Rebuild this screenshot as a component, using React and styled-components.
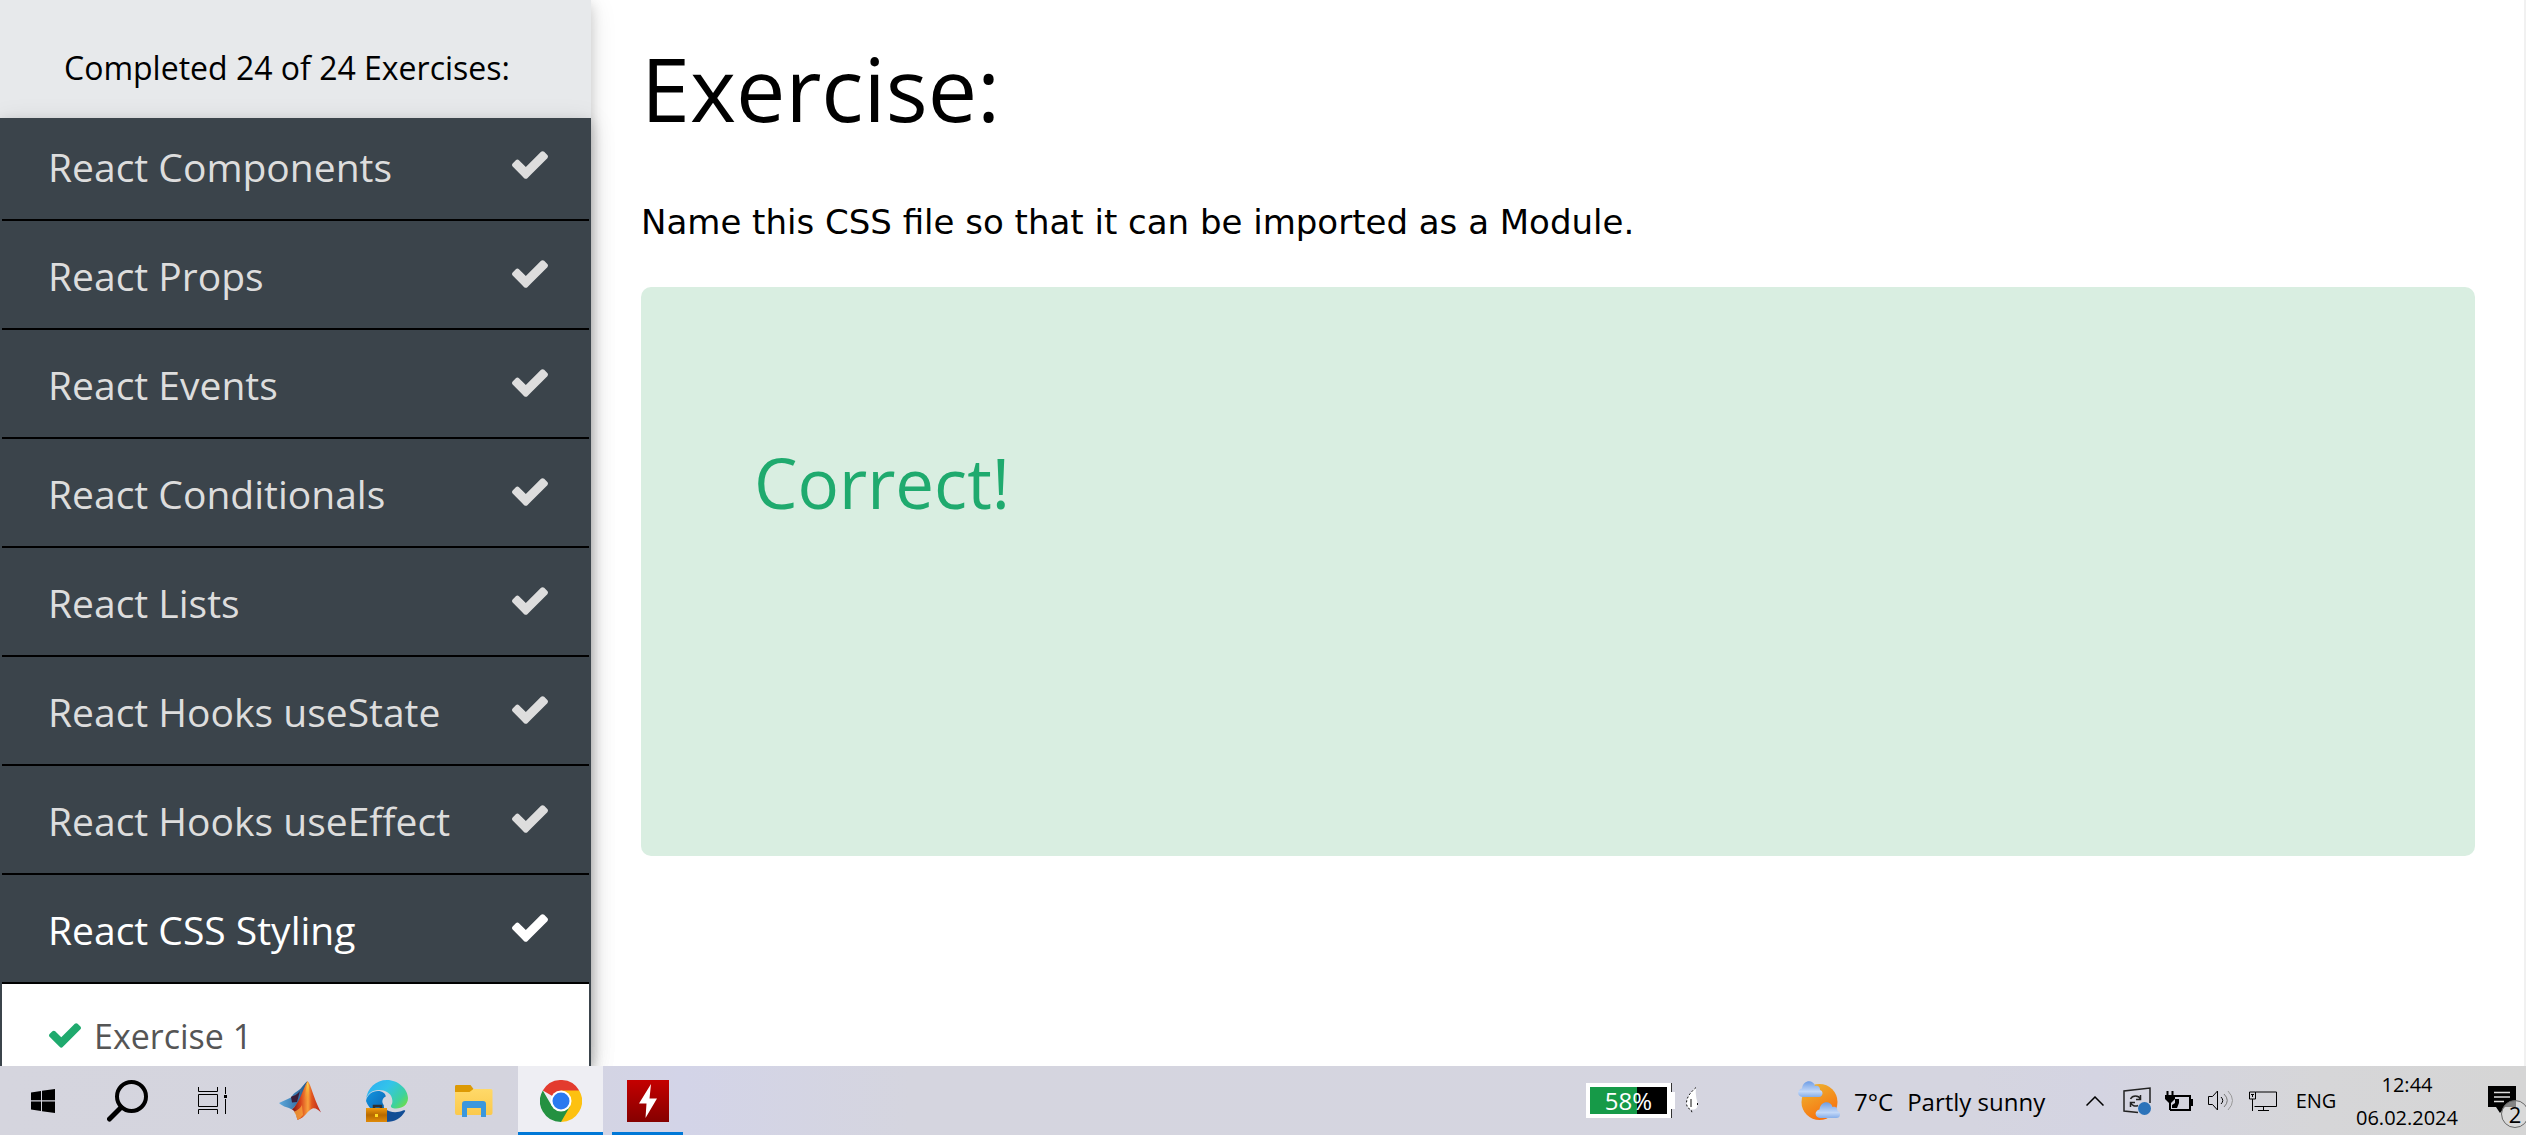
import React from "react";
import styled, { createGlobalStyle } from "styled-components";

const GlobalStyle = createGlobalStyle`
  * { box-sizing: border-box; }
  body {
    margin: 0;
    background: #fff;
    color: #000;
    font-family: "Open Sans", "Noto Sans", sans-serif;
  }
  button { font: inherit; color: inherit; border: 0; background: none; padding: 0; margin: 0; cursor: pointer; }
  svg { display: block; flex: none; }
`;

const Screen = styled.div`
  height: 100vh;
  display: flex;
  flex-direction: column;
  overflow: hidden;
`;

const Page = styled.div`
  flex: 1;
  min-height: 0;
  display: flex;
  border-right: 2px solid #f1f1f1;
`;

const Sidebar = styled.aside`
  width: 591px;
  flex: none;
  display: flex;
  flex-direction: column;
  background: #e7e9eb;
  box-shadow: 0 5px 12px rgba(0, 0, 0, 0.16), 0 5px 25px rgba(0, 0, 0, 0.12);
`;

const Progress = styled.div`
  height: 118px;
  flex: none;
  padding: 44px 64px 0;
  font-size: 32px;
  line-height: 48px;
  white-space: nowrap;
`;

const Menu = styled.nav`
  flex: 1;
  min-height: 0;
  background: #3b444b;
  box-shadow: 0 5px 12px rgba(0, 0, 0, 0.16), 0 5px 25px rgba(0, 0, 0, 0.12);
  overflow: hidden;
`;

const MenuList = styled.ul`
  list-style: none;
  margin: -6px 0 0;
  padding: 0 2px;
`;

const Topic = styled.button`
  width: 100%;
  height: 109px;
  display: flex;
  align-items: center;
  justify-content: space-between;
  padding: 0 41px 2px 46px;
  border-bottom: 2px solid #000;
  color: ${(p) => (p.$active ? "#fff" : "#ddd")};
  font-size: 39px;
  line-height: 56px;
  white-space: nowrap;
`;

const TopicName = styled.span`
  padding-top: 4px;
`;

const ExerciseLink = styled.a`
  display: flex;
  align-items: center;
  gap: 13px;
  height: 103px;
  padding: 0 47px;
  background: #fff;
  color: #555;
  font-size: 34px;
  line-height: 48px;
  text-decoration: none;
`;

const Content = styled.main`
  flex: 1;
  min-width: 0;
  padding: 34px 49px 0 50px;
`;

const Title = styled.h1`
  margin: 0;
  font-size: 88px;
  line-height: 108px;
  font-weight: 400;
`;

const Task = styled.p`
  margin: 56px 0 41px;
  font-family: "DejaVu Sans", sans-serif;
  font-size: 34px;
  line-height: 48px;
`;

const Result = styled.section`
  height: 569px;
  padding: 145px 113px;
  border-radius: 10px;
  background: #d9eee1;
`;

const ResultTitle = styled.h2`
  margin: 0;
  color: #1faa6e;
  font-size: 69px;
  line-height: 100px;
  font-weight: 400;
`;

const Taskbar = styled.footer`
  height: 69px;
  flex: none;
  display: flex;
  justify-content: space-between;
  background: linear-gradient(90deg, #d5d5de 0%, #d4d4de 20%, #d3d4e8 27%, #d5d5df 36%, #d5d5e0 78%, #d4d4e2 83%, #d6d6d8 92%, #d5d5d5 100%);
`;

const Group = styled.div`
  display: flex;
  align-items: stretch;
  gap: ${(p) => p.$gap || 0}px;
`;

const AppButton = styled.button`
  width: 85px;
  display: flex;
  flex-direction: column;
  align-items: center;
  justify-content: space-between;
  background: ${(p) => (p.$active ? "#eeeef3" : "none")};
  &::after {
    content: "";
    width: ${(p) => (p.$active ? "100%" : "71px")};
    height: 3px;
    background: ${(p) => (p.$running ? "#0078d7" : "transparent")};
  }
`;

const IconBox = styled.span`
  flex: 1;
  display: flex;
  align-items: center;
  padding-top: 3px;
`;

const BatteryMeter = styled.div`
  display: flex;
  align-items: center;
  gap: 11px;
  margin-right: 100px;
`;

const BatteryShell = styled.div`
  display: flex;
  align-items: center;
`;

const BatteryBody = styled.div`
  width: 85px;
  height: 35px;
  border: 4px solid #fff;
  background: linear-gradient(90deg, #169a48 0 47px, #000 47px);
  box-shadow: 1px 0 #333;
  color: #fff;
  font-size: 24px;
  line-height: 28px;
  text-align: center;
`;

const BatteryCap = styled.div`
  width: 4px;
  height: 17px;
  background: #fff;
`;

const Weather = styled.button`
  width: 276px;
  display: flex;
  align-items: center;
  gap: 14px;
  font-size: 24px;
  line-height: 32px;
  white-space: nowrap;
`;

const Forecast = styled.span`
  display: flex;
  gap: 14px;
  padding-top: 2px;
`;

const TrayButton = styled.button`
  width: ${(p) => p.$width || 42}px;
  display: flex;
  flex-direction: column;
  align-items: center;
  justify-content: center;
  font-size: 20px;
  line-height: 33px;
  white-space: nowrap;
`;

const Notifications = styled.button`
  width: 60px;
  position: relative;
  padding: 0 0 2px 22px;
  overflow: hidden;
`;

const Badge = styled.span`
  position: absolute;
  left: 35px;
  top: 34px;
  width: 28px;
  height: 28px;
  border: 1px solid #666;
  border-radius: 50%;
  background: rgba(220, 220, 220, 0.6);
  font-size: 22px;
  line-height: 26px;
  text-align: center;
`;

const CheckIcon = ({ width, color = "currentColor" }) => (
  <svg width={width} height={(width * 28) / 36} viewBox="121 334 1550 1188" fill={color}>
    <path d="M1671 566q0 40-28 68l-724 724-136 136q-28 28-68 28t-68-28l-136-136-362-362q-28-28-28-68t28-68l136-136q28-28 68-28t68 28l294 295 656-657q28-28 68-28t68 28l136 136q28 28 28 68z" />
  </svg>
);

const WindowsIcon = () => (
  <svg width="24" height="24" viewBox="0 0 24 24">
    <path d="M0 3.4 10 2v9.3H0zM11 1.8 24 0v11.3H11zM0 12.4h10V22L0 20.6zM11 12.4h13V24l-13-1.8z" />
  </svg>
);

const SearchIcon = () => (
  <svg width="42" height="42" viewBox="0 0 42 42" fill="none" stroke="#000">
    <circle cx="24.5" cy="16.5" r="14.5" strokeWidth="4" />
    <path d="M14 27.5 2.5 39" strokeWidth="5" strokeLinecap="round" />
  </svg>
);

const TaskViewIcon = () => (
  <svg width="29" height="27" viewBox="0 0 29 27" fill="none" stroke="#000">
    <path d="M.5 0v4.5h19V0M.5 7.5h19v12H.5zM.5 27v-4.5h19V27M27.5 0v7M27.5 12v15" />
    <path d="M26 8h3v3h-3z" fill="#000" stroke="none" />
  </svg>
);

const MatlabIcon = () => (
  <svg width="42" height="40" viewBox="0 0 42 40">
    <defs>
      <linearGradient id="mlBlue" x1="0" x2="1"><stop offset="0" stopColor="#5ea9dc" /><stop offset="1" stopColor="#20588f" /></linearGradient>
      <linearGradient id="mlRed" x1="0" x2="1">
        <stop offset="0" stopColor="#7a1512" /><stop offset=".3" stopColor="#d8431c" /><stop offset=".55" stopColor="#f9a13c" />
        <stop offset=".68" stopColor="#e2571f" /><stop offset="1" stopColor="#b8201c" />
      </linearGradient>
      <linearGradient id="mlGlow" x1="0" y1="0" x2="0" y2="1"><stop offset="0" stopColor="#ffe24d" /><stop offset="1" stopColor="#f08a24" stopOpacity="0" /></linearGradient>
    </defs>
    <path d="M0 22 12 16.500C15 11 20 10 22.500 6.500 25 3.500 26.500 1.500 28.500 0L22 19l-9 9.500C9 26 5 26.500 0 22z" fill="url(#mlBlue)" />
    <path d="M12 16c3-2 5-1 9-6l-3 11-5 .500z" fill="#3a1c38" />
    <path d="M28.500 0c3.500 3 5 15 13.500 31.500-3-3-6-5-8.500-4-5 2-7 9-15 11.500-1-4-2-9-5.500-10.500C20 23 24 8 28.500 0z" fill="url(#mlRed)" />
    <path d="M28.500 1c2 3 2 13 1 20l-4-3c1-7 2-12 3-17z" fill="url(#mlGlow)" />
    <path d="M15 31c3-2 6-3 8-7l1 10c-2 2-3 4-5.500 5-1-3-1.500-6-3.500-8z" fill="#f9a93c" opacity=".75" />
  </svg>
);

const EdgeIcon = () => (
  <svg width="42" height="42" viewBox="0 0 42 42">
    <defs>
      <linearGradient id="edTop" x1="0" y1=".2" x2="1" y2=".8"><stop offset="0" stopColor="#2fb0f2" /><stop offset=".4" stopColor="#33c4ea" /><stop offset=".8" stopColor="#3fd29a" /><stop offset="1" stopColor="#6ddc4c" /></linearGradient>
      <linearGradient id="edMid" x1="0" y1="0" x2="1" y2="1"><stop offset="0" stopColor="#1296e0" /><stop offset="1" stopColor="#0b5fae" /></linearGradient>
      <linearGradient id="edCase" x1="0" y1="0" x2="0" y2="1"><stop offset="0" stopColor="#f09a0e" /><stop offset=".5" stopColor="#b86a00" /><stop offset="1" stopColor="#e08a08" /></linearGradient>
    </defs>
    <path d="M0 21a21 21 0 0 0 21 14c-4-6-4-12-1-17 0-5-4-7-8-7-6 0-11 4-12 10z" fill="url(#edMid)" />
    <path d="M18 28c6 5 13 5 19 2.500 2-.5 2.500 0 2 1C35 38 29 42 20 42z" fill="#124d95" />
    <path d="M0 20C1 8 10 0 21 0s21 9 21 18c0 7-6 10.500-12 10.500-4 0-6-1.500-5-3 1-1.500 2-3 1-7C25 13 19 10 13 10 6 10 1 14 0 20z" fill="url(#edTop)" />
    <path d="M17 24c-2-4 1-8 5-8 3 0 4 3 4 5 0 3-2 4-1 6l-5 1z" fill="#d5d5de" />
    <path d="M8 28v-2h7v2" fill="none" stroke="#33302c" strokeWidth="2.5" />
    <path d="M0 28h21v14H0z" fill="url(#edCase)" />
    <path d="M9 34h3v3H9z" fill="#ffdc22" />
  </svg>
);

const FolderIcon = () => (
  <svg width="38" height="32" viewBox="0 0 38 32">
    <defs><linearGradient id="folder" x1="0" y1="0" x2="0" y2="1"><stop offset="0" stopColor="#ffd969" /><stop offset="1" stopColor="#fbc94c" /></linearGradient></defs>
    <path d="M1.500 0h14l3 4-3 5H0V1.500C0 .500 .500 0 1.500 0z" fill="#dd9a04" />
    <path d="M0 7h14.500l4-3H36q1.500 0 1.500 1.500V28q0 2-2 2H2q-2 0-2-2z" fill="url(#folder)" />
    <path d="M7 32V19q0-3 3-3h18q3 0 3 3v13h-5v-9H12v9z" fill="#3b97dd" />
  </svg>
);

const ChromeIcon = () => (
  <svg width="42" height="42" viewBox="0 0 42 42">
    <path d="M21 21 2.800 10.500A21 21 0 0 1 39.200 10.500L37 12z" fill="#e33b2e" />
    <path d="M21 10.500h18.200A21 21 0 0 1 21 42l3-14z" fill="#fdc110" />
    <path d="M2.800 10.500 12 26.300 30.100 26.300 21 42A21 21 0 0 1 2.800 10.500z" fill="#249141" />
    <circle cx="21" cy="21" r="10.5" fill="#fff" />
    <circle cx="21" cy="21" r="8.5" fill="#2a7af0" />
  </svg>
);

const BoltIcon = () => (
  <svg width="42" height="42" viewBox="0 0 42 42">
    <defs><linearGradient id="bolt" x1="0" y1="0" x2="0" y2="1"><stop offset="0" stopColor="#c40000" /><stop offset="1" stopColor="#850000" /></linearGradient></defs>
    <path d="M0 0h42v42H0z" fill="url(#bolt)" />
    <path d="M24 4 12 23.500h7.500L18.500 38 30 18.500h-7.500z" fill="#fff" />
  </svg>
);

const LeafIcon = () => (
  <svg width="12" height="28" viewBox="0 0 12 28">
    <path d="M10 .5C5 5 .5 10 .5 16c0 4 2 6 4.500 6.500h3c3-.5 3.500-2.500 3.500-5C11.500 13 9 10 10 .5z" fill="#fff" />
    <path d="M10 .5C5 5 .5 10 .5 16c0 4 2 6 4.500 6.500L6.500 27M11.500 16v3" fill="none" stroke="#111" strokeDasharray="2 2" />
    <path d="M5 12v8" stroke="#111" />
  </svg>
);

const WeatherIcon = () => (
  <svg width="42" height="40" viewBox="0 0 42 40">
    <defs>
      <linearGradient id="sun" x1=".2" y1="0" x2=".7" y2="1"><stop offset="0" stopColor="#edb431" /><stop offset="1" stopColor="#f96c0c" /></linearGradient>
      <linearGradient id="cloud" x1="0" y1="0" x2="0" y2="1"><stop offset="0" stopColor="#6f9ee6" /><stop offset=".65" stopColor="#c3d8f8" /><stop offset="1" stopColor="#86aeea" /></linearGradient>
      <path id="cloudShape" d="M4.500 16C-1 16-1.500 8.500 4 7.500 5-1 15-2 17 5c4-1 5 2 5 4 4 1 3 7-1 7z" />
    </defs>
    <circle cx="21.5" cy="21" r="18" fill="url(#sun)" />
    <use href="#cloudShape" fill="url(#cloud)" />
    <use href="#cloudShape" x="17.5" y="21" fill="url(#cloud)" />
  </svg>
);

const ChevronIcon = () => (
  <svg width="18" height="10" viewBox="0 0 18 10" fill="none" stroke="#000" strokeWidth="1.5"><path d="M.5 9.500 9 1l8.500 8.500" /></svg>
);

const SyncIcon = () => (
  <svg width="28" height="28" viewBox="0 0 28 28" fill="none" stroke="#222" strokeWidth="1.5">
    <path d="M15 25.500 1 24V4L27 1v15" />
    <path d="M7.500 12c2-4 8-4 10 0m0-4v4.500H13M15 18.500c-3 1.500-6 0-7.500-3m0 4.500v-4.500h4.500" />
    <circle cx="21.5" cy="21.5" r="6.5" fill="#2b73ba" stroke="none" />
  </svg>
);

const PowerIcon = () => (
  <svg width="28" height="20" viewBox="0 0 28 20">
    <path d="M10 5h15v14H5" fill="none" stroke="#000" strokeWidth="2" />
    <path d="M26 8h2v7h-2zM10 8h4v4l-2 5H7v-3l3-2z" />
    <path d="M1.500 0h2v4h3V0h2v4H10v4L6 12v7H4v-7L0 8V4h1.500z" />
  </svg>
);

const SpeakerIcon = () => (
  <svg width="26" height="21" viewBox="0 0 26 21" fill="none" stroke="#000">
    <path d="M.500 6.500h4l5-5.500v19l-5-5.500h-4z" />
    <path d="M13 7q3.500 3.500 0 7" />
    <path d="M16 4q6.500 6.500 0 13" stroke="#777" />
    <path d="M20 1q9 9.500 0 19" stroke="#999" />
  </svg>
);

const NetworkIcon = () => (
  <svg width="28" height="20" viewBox="0 0 28 20" fill="none" stroke="#000">
    <path d="M6.500 1h21v14.500h-22M14.500 16v3M9 19.500h11M.500 1h6v7h-6zM3.500 8v12M2 3.500h3M3.500 4v2" />
  </svg>
);

const MessageIcon = () => (
  <svg width="28" height="27" viewBox="0 0 28 27">
    <path d="M0 0h28v21H17l-5 6-4-6H0z" />
    <path d="M6 6.500h16M6 11h16M6 15.500h10" stroke="#ddd" strokeWidth="1.5" />
  </svg>
);

const TOPICS = [
  "React Components",
  "React Props",
  "React Events",
  "React Conditionals",
  "React Lists",
  "React Hooks useState",
  "React Hooks useEffect",
  "React CSS Styling",
];

const SYSTEM_APPS = [
  { label: "Start", Icon: WindowsIcon },
  { label: "Search", Icon: SearchIcon },
  { label: "Task view", Icon: TaskViewIcon },
];

const APPS = [
  { label: "MATLAB", Icon: MatlabIcon },
  { label: "Microsoft Edge", Icon: EdgeIcon },
  { label: "File Explorer", Icon: FolderIcon },
  { label: "Google Chrome", Icon: ChromeIcon, active: true, running: true },
  { label: "Lightning", Icon: BoltIcon, running: true },
];

const TRAY = [
  { label: "Show hidden icons", Icon: ChevronIcon },
  { label: "Sync", Icon: SyncIcon },
  { label: "Power", Icon: PowerIcon },
  { label: "Volume", Icon: SpeakerIcon },
  { label: "Network", Icon: NetworkIcon },
];

const AppGroup = ({ apps, gap }) => (
  <Group $gap={gap}>
    {apps.map(({ label, Icon, active, running }) => (
      <AppButton key={label} type="button" aria-label={label} $active={active} $running={running}>
        <IconBox><Icon /></IconBox>
      </AppButton>
    ))}
  </Group>
);

export default function App() {
  return (
    <Screen>
      <GlobalStyle />
      <Page>
        <Sidebar>
          <Progress>Completed 24 of 24 Exercises:</Progress>
          <Menu>
            <MenuList>
              {TOPICS.map((name) => (
                <li key={name}>
                  <Topic type="button" $active={name === "React CSS Styling"}>
                    <TopicName>{name}</TopicName>
                    <CheckIcon width={36} />
                  </Topic>
                </li>
              ))}
              <li>
                <ExerciseLink href="#exercise-1">
                  <CheckIcon width={32} color="#1faa6e" />
                  Exercise 1
                </ExerciseLink>
              </li>
            </MenuList>
          </Menu>
        </Sidebar>
        <Content>
          <Title>Exercise:</Title>
          <Task>Name this CSS file so that it can be imported as a Module.</Task>
          <Result>
            <ResultTitle>Correct!</ResultTitle>
          </Result>
        </Content>
      </Page>
      <Taskbar>
        <Group $gap={2}>
          <AppGroup apps={SYSTEM_APPS} gap={0} />
          <AppGroup apps={APPS} gap={2} />
        </Group>
        <Group>
          <BatteryMeter>
            <BatteryShell>
              <BatteryBody>58%</BatteryBody>
              <BatteryCap />
            </BatteryShell>
            <LeafIcon />
          </BatteryMeter>
          <Weather type="button">
            <WeatherIcon />
            <Forecast>
              <span>7°C</span>
              <span>Partly sunny</span>
            </Forecast>
          </Weather>
          {TRAY.map(({ label, Icon }) => (
            <TrayButton key={label} type="button" aria-label={label}><Icon /></TrayButton>
          ))}
          <TrayButton type="button" $width={64}>ENG</TrayButton>
          <TrayButton type="button" $width={118}>
            <span>12:44</span>
            <span>06.02.2024</span>
          </TrayButton>
          <Notifications type="button" aria-label="Notifications">
            <MessageIcon />
            <Badge>2</Badge>
          </Notifications>
        </Group>
      </Taskbar>
    </Screen>
  );
}
